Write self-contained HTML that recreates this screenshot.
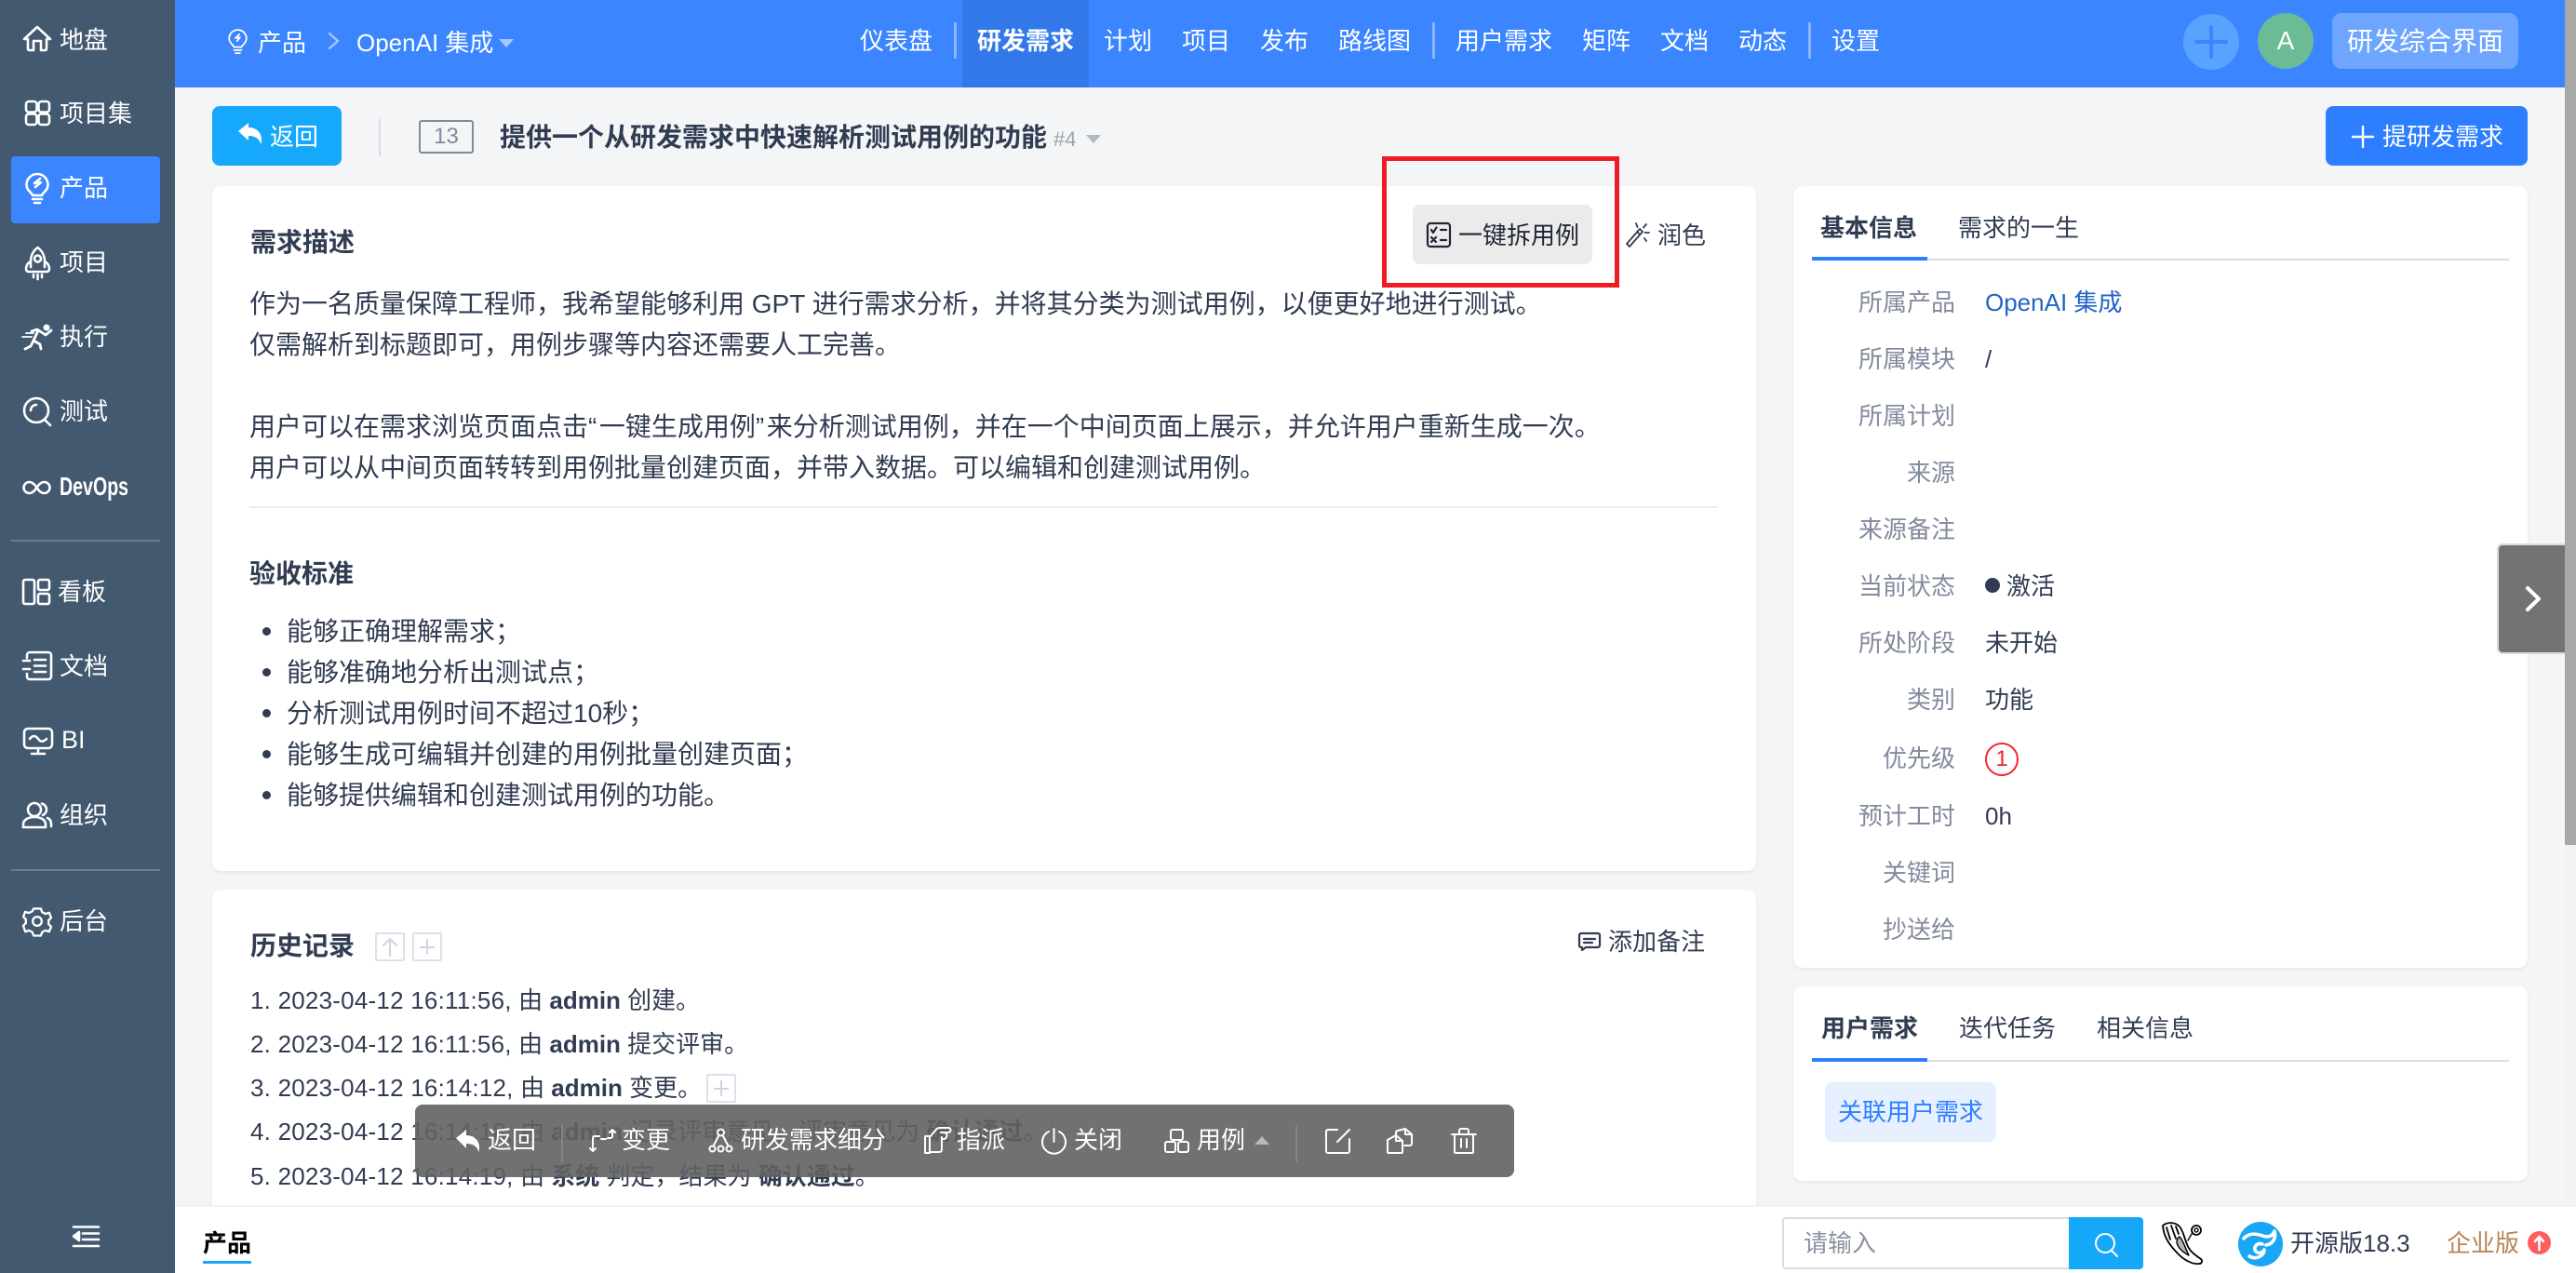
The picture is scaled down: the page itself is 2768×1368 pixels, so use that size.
<!DOCTYPE html>
<html lang="zh"><head><meta charset="utf-8"><title>OpenAI 集成</title>
<style>
*{box-sizing:border-box}
html,body{margin:0;padding:0}
body{width:2768px;height:1368px;overflow:hidden;position:relative;background:#f4f5f7;font-family:"Liberation Sans","Noto Sans CJK SC",sans-serif;font-size:26px;color:#313c52}
.a{position:absolute}
.t{position:absolute;white-space:nowrap;line-height:44px;height:44px}
.b{font-weight:700}
.w{color:#fff}
.h{letter-spacing:.22px}
.q{letter-spacing:2.5px}
svg{position:absolute;overflow:visible;fill:none;stroke:#fff;stroke-width:2.6;stroke-linecap:round;stroke-linejoin:round}
.card{position:absolute;background:#fff;border-radius:10px;box-shadow:0 2px 5px rgba(0,0,0,.06)}
.l{position:absolute;right:667px;white-space:nowrap;line-height:44px;height:44px;color:#838a9d}
.v{position:absolute;left:2133px;white-space:nowrap;line-height:44px;height:44px}
.sep{position:absolute;top:24px;width:3px;height:39px;background:#8ab5ff}
.pl{position:absolute;border:2px solid #dde1e8;border-radius:2px}
.pl i{position:absolute;background:#cfd5e0}
</style></head><body>

<!-- main cards -->
<div class="card" style="left:228px;top:200px;width:1659px;height:736px"></div>
<div class="t b" style="left:269px;top:239px;font-size:28px">需求描述</div>
<div class="t" style="left:268px;top:305px;font-size:28px">作为一名质量保障工程师，我希望能够利用 GPT 进行需求分析，并将其分类为测试用例，以便更好地进行测试。</div>
<div class="t" style="left:268px;top:349px;font-size:28px">仅需解析到标题即可，用例步骤等内容还需要人工完善。</div>
<div class="t" style="left:268px;top:437px;font-size:28px">用户可以在需求浏览页面点击<span class="q">“</span>一键生成用例<span class="q">”</span>来分析测试用例，并在一个中间页面上展示，并允许用户重新生成一次。</div>
<div class="t" style="left:268px;top:481px;font-size:28px">用户可以从中间页面转转到用例批量创建页面，并带入数据。可以编辑和创建测试用例。</div>
<div class="a" style="left:268px;top:544px;width:1578px;height:2px;background:#eceef1"></div>
<div class="t b" style="left:268px;top:595px;font-size:28px">验收标准</div>
<div class="a" style="left:282px;top:674px;width:9px;height:9px;border-radius:50%;background:#313c52"></div>
<div class="a" style="left:282px;top:718px;width:9px;height:9px;border-radius:50%;background:#313c52"></div>
<div class="a" style="left:282px;top:762px;width:9px;height:9px;border-radius:50%;background:#313c52"></div>
<div class="a" style="left:282px;top:806px;width:9px;height:9px;border-radius:50%;background:#313c52"></div>
<div class="a" style="left:282px;top:850px;width:9px;height:9px;border-radius:50%;background:#313c52"></div>
<div class="t" style="left:308px;top:657px;font-size:28px">能够正确理解需求；</div>
<div class="t" style="left:308px;top:701px;font-size:28px">能够准确地分析出测试点；</div>
<div class="t" style="left:308px;top:745px;font-size:28px">分析测试用例时间不超过10秒；</div>
<div class="t" style="left:308px;top:789px;font-size:28px">能够生成可编辑并创建的用例批量创建页面；</div>
<div class="t" style="left:308px;top:833px;font-size:28px">能够提供编辑和创建测试用例的功能。</div>

<!-- one click button -->
<div class="a" style="left:1518px;top:220px;width:193px;height:64px;background:#ebebeb;border-radius:8px"></div>
<svg style="left:1533px;top:239px;stroke:#1f2533;stroke-width:2.2" width="26" height="27" viewBox="0 0 26 27"><rect x="1" y="1" width="24" height="25" rx="3"/><path d="M5 8l2 3L10.500 5.500M15 8h6M5 16l5 5M10 16l-5 5M15 19h6"/></svg>
<div class="t" style="left:1567px;top:231px;color:#1f2533">一键拆用例</div>
<svg style="left:1747px;top:238px;stroke:#313c52;stroke-width:1.800" width="26" height="28" viewBox="0 0 26 28"><path d="M1 24l3 3L18 11l-3-3zM12 11l3 3M11 2l1.500 4M22 3l-3 3.500M25 12l-4.500 0M20 18l2 3"/></svg>
<div class="t" style="left:1781px;top:231px">润色</div>
<div class="a" style="left:1485px;top:168px;width:255px;height:141px;border:5px solid #ee1c25"></div>

<!-- history -->
<div class="card" style="left:228px;top:956px;width:1659px;height:360px"></div>
<div class="t b" style="left:269px;top:995px;font-size:28px">历史记录</div>
<div class="pl" style="left:403px;top:1002px;width:32px;height:31px"><svg style="left:6px;top:4px;stroke:#cfd5e0;stroke-width:2.200" width="16" height="19" viewBox="0 0 16 19"><path d="M8 19V1M1 8l7-7 7 7"/></svg></div>
<div class="pl" style="left:443px;top:1002px;width:32px;height:31px"><i style="left:6px;top:12.500px;width:16px;height:2px"></i><i style="left:13px;top:5px;width:2px;height:17px"></i></div>
<svg style="left:1696px;top:1002px;stroke:#313c52;stroke-width:2.200" width="24" height="20" viewBox="0 0 24 20"><path d="M3 1h18a2 2 0 0 1 2 2v11a2 2 0 0 1-2 2H8l-4 3v-3H3a2 2 0 0 1-2-2V3a2 2 0 0 1 2-2zM6 7h12M6 11h9"/></svg>
<div class="t" style="left:1728px;top:990px">添加备注</div>
<div class="t" style="left:269px;top:1053px"><span class="h">1. 2023-04-12 16:11:56, </span>由 <span class="b">admin</span> 创建。</div>
<div class="t" style="left:269px;top:1100px"><span class="h">2. 2023-04-12 16:11:56, </span>由 <span class="b">admin</span> 提交评审。</div>
<div class="t" style="left:269px;top:1147px"><span class="h">3. 2023-04-12 16:14:12, </span>由 <span class="b">admin</span> 变更。</div>
<div class="pl" style="left:759px;top:1154px;width:32px;height:31px"><i style="left:6px;top:12.500px;width:16px;height:2px"></i><i style="left:13px;top:5px;width:2px;height:17px"></i></div>
<div class="t" style="left:269px;top:1194px"><span class="h">4. 2023-04-12 16:14:18, </span>由 <span class="b">admin</span> 记录评审意见，评审意见为 <span class="b">确认通过</span>。</div>
<div class="pl" style="left:1130px;top:1200px;width:32px;height:31px"><i style="left:6px;top:12.500px;width:16px;height:2px"></i><i style="left:13px;top:5px;width:2px;height:17px"></i></div>
<div class="t" style="left:269px;top:1242px"><span class="h">5. 2023-04-12 16:14:19, </span>由 <span class="b">系统</span> 判定，结果为 <span class="b">确认通过</span>。</div>

<!-- toolbar -->
<div class="a" style="left:446px;top:1187px;width:1181px;height:78px;background:rgba(98,98,98,.9);border-radius:8px"></div>
<svg style="left:490px;top:1213px;stroke-width:0;fill:#fff" width="25" height="26" viewBox="0 0 25 26"><path d="M0 10L11 1v6c8 0 14 5 14 13 0 2-.3 4-.8 5-1-5-5-9-13.200-9v5z"/></svg>
<div class="t w" style="left:524px;top:1203px">返回</div>
<div class="a" style="left:603px;top:1209px;width:2px;height:40px;background:#858585"></div>
<svg style="left:635px;top:1213px;stroke-width:2" width="25" height="25" viewBox="0 0 25 25"><path d="M11 11H16M9 8H4a2 2 0 0 0-2 2v14M-1 21l3 3 3-3M23 1v7a2 2 0 0 1-2 2h-3M20 4l3-3 3 3" /></svg>
<div class="t w" style="left:668px;top:1203px">变更</div>
<svg style="left:762px;top:1213px;stroke-width:2" width="25" height="25" viewBox="0 0 25 25"><circle cx="12.500" cy="4" r="3.500"/><circle cx="3.500" cy="21.500" r="3"/><circle cx="12.500" cy="21.500" r="3"/><circle cx="21.500" cy="21.500" r="3"/><path d="M10.500 7L4.500 18.500M14.500 7L20.500 18.500"/></svg>
<div class="t w" style="left:796px;top:1203px">研发需求细分</div>
<svg style="left:993px;top:1211px;stroke-width:2" width="29" height="29" viewBox="0 0 29 29"><path d="M1 10h5v18H1zM6 11l6-7c1-2 3-3 5-3h9a2 2 0 0 1 0 5h-8M6 27h10c2 0 3-1 3-3V11M18 6h3a3.500 3.500 0 0 1 0 7h-2"/></svg>
<div class="t w" style="left:1028px;top:1203px">指派</div>
<svg style="left:1119px;top:1212px;stroke-width:2" width="27" height="28" viewBox="0 0 27 28"><path d="M8 4a12.500 12.500 0 1 0 11 0M13.500 1v14"/></svg>
<div class="t w" style="left:1154px;top:1203px">关闭</div>
<svg style="left:1251px;top:1213px;stroke-width:2" width="27" height="26" viewBox="0 0 27 26"><rect x="7" y="1" width="13" height="11" rx="2"/><rect x="1" y="14" width="11" height="11" rx="2"/><rect x="15" y="14" width="11" height="11" rx="2"/></svg>
<div class="t w" style="left:1286px;top:1203px">用例</div>
<div class="a" style="left:1348px;top:1221px;width:0;height:0;border-left:8px solid transparent;border-right:8px solid transparent;border-bottom:9px solid #b9b9b9"></div>
<div class="a" style="left:1392px;top:1209px;width:2px;height:40px;background:#858585"></div>
<svg style="left:1424px;top:1213px;stroke-width:2" width="27" height="27" viewBox="0 0 27 27"><path d="M13 1H3a2 2 0 0 0-2 2v21a2 2 0 0 0 2 2h21a2 2 0 0 0 2-2V11M26 1L13 14"/></svg>
<svg style="left:1490px;top:1212px;stroke-width:2" width="28" height="28" viewBox="0 0 28 28"><path d="M10 7V5a2 2 0 0 1 2-2l8-2 7 6v10a2 2 0 0 1-2 2h-6M20 1v6h7M1 13l9-5 7 6v12a1 1 0 0 1-1 1H2a1 1 0 0 1-1-1zM10 8v6h7"/></svg>
<svg style="left:1559px;top:1212px;stroke-width:2" width="28" height="28" viewBox="0 0 28 28"><path d="M1 7h26M9 7V3a2 2 0 0 1 2-2h6a2 2 0 0 1 2 2v4M4 7v19a1 1 0 0 0 1 1h18a1 1 0 0 0 1-1V7M11 12v9M17 12v9"/></svg>

<!-- right cards -->
<div class="card" style="left:1927px;top:200px;width:789px;height:840px"></div>
<div class="t b" style="left:1956px;top:223px">基本信息</div>
<div class="t" style="left:2104px;top:223px">需求的一生</div>
<div class="a" style="left:1947px;top:278px;width:749px;height:2px;background:#dcdee2"></div>
<div class="a" style="left:1947px;top:276px;width:124px;height:4px;background:#2e7fff"></div>
<div class="l" style="top:303px">所属产品</div><div class="v" style="top:303px;color:#2463c7">OpenAI 集成</div>
<div class="l" style="top:364px">所属模块</div><div class="v" style="top:364px">/</div>
<div class="l" style="top:425px">所属计划</div>
<div class="l" style="top:486px">来源</div>
<div class="l" style="top:547px">来源备注</div>
<div class="l" style="top:608px">当前状态</div><div class="v" style="top:608px;left:2156px">激活</div>
<div class="a" style="left:2133px;top:621px;width:16px;height:16px;border-radius:50%;background:#313c52"></div>
<div class="l" style="top:669px">所处阶段</div><div class="v" style="top:669px">未开始</div>
<div class="l" style="top:730px">类别</div><div class="v" style="top:730px">功能</div>
<div class="l" style="top:793px">优先级</div>
<div class="a" style="left:2133px;top:798px;width:36px;height:36px;border:2px solid #f5242c;border-radius:50%;color:#f5242c;text-align:center;line-height:32px;font-size:24px">1</div>
<div class="l" style="top:855px">预计工时</div><div class="v" style="top:855px">0h</div>
<div class="l" style="top:916px">关键词</div>
<div class="l" style="top:977px">抄送给</div>

<div class="card" style="left:1927px;top:1060px;width:789px;height:209px"></div>
<div class="t b" style="left:1957px;top:1083px">用户需求</div>
<div class="t" style="left:2105px;top:1083px">迭代任务</div>
<div class="t" style="left:2253px;top:1083px">相关信息</div>
<div class="a" style="left:1947px;top:1139px;width:749px;height:2px;background:#dcdee2"></div>
<div class="a" style="left:1947px;top:1137px;width:124px;height:4px;background:#2e7fff"></div>
<div class="a" style="left:1961px;top:1163px;width:184px;height:64px;background:#e6f0ff;border-radius:8px;color:#2e7fff;text-align:center;line-height:64px">关联用户需求</div>

<!-- header action row -->
<div class="a" style="left:228px;top:114px;width:139px;height:64px;background:#16a8fb;border-radius:8px"></div>
<svg style="left:256px;top:132px;stroke-width:0;fill:#fff" width="25" height="24" viewBox="0 0 25 24"><path d="M0 9L11 0v5c8 0 14 5 14 13 0 2-.3 4-.8 5-1-5-5-9-13.200-9v5z"/></svg>
<div class="t w" style="left:290px;top:125px">返回</div>
<div class="a" style="left:407px;top:128px;width:2px;height:40px;background:#d9dce2"></div>
<div class="a" style="left:450px;top:129px;width:59px;height:36px;border:2px solid #838a9d;border-radius:3px;color:#838a9d;text-align:center;line-height:32px;font-size:24px">13</div>
<div class="t b" style="left:537px;top:126px;font-size:28px">提供一个从研发需求中快速解析测试用例的功能</div>
<div class="t" style="left:1132px;top:128px;font-size:22px;color:#9ba1b0">#4</div>
<div class="a" style="left:1167px;top:145px;width:0;height:0;border-left:8px solid transparent;border-right:8px solid transparent;border-top:9px solid #b4b8c4"></div>
<div class="a" style="left:2499px;top:114px;width:217px;height:64px;background:#2e7fff;border-radius:8px"></div>
<svg style="left:2528px;top:136px;stroke-width:2.400" width="22" height="22" viewBox="0 0 22 22"><path d="M11 0v22M0 11h22"/></svg>
<div class="t w" style="left:2560px;top:125px">提研发需求</div>

<!-- drawer handle -->
<div class="a" style="left:2683px;top:584px;width:73px;height:119px;background:#737373;border:2px solid #dcdcdc;border-right:0;border-radius:6px 0 0 6px"></div>
<svg style="left:2714px;top:630px;stroke-width:4" width="16" height="27" viewBox="0 0 16 27"><path d="M2 2l12 11.500L2 25"/></svg>

<!-- topbar -->
<div class="a" style="left:188px;top:0;width:2568px;height:94px;background:#3b86ff"></div>
<svg style="left:245px;top:31px;stroke-width:2.200" width="21" height="28" viewBox="0 0 26 34"><path d="M8 24C7.500 21 1.500 19 1.500 12.500a11.500 11.500 0 0 1 23 0C24.500 19 18.500 21 18 24zM8 28h10M10 32h6M15 7l-5 5 6-1-4 5"/></svg>
<div class="t w" style="left:277px;top:24px">产品</div>
<svg style="left:353px;top:35px;stroke:#a7c7ff;stroke-width:2.400" width="11" height="18" viewBox="0 0 11 18"><path d="M1 1l9 8-9 8"/></svg>
<div class="t w" style="left:383px;top:24px">OpenAI 集成</div>
<div class="a" style="left:536px;top:42px;width:0;height:0;border-left:8px solid transparent;border-right:8px solid transparent;border-top:9px solid #a7c7ff"></div>
<div class="t w" style="left:924px;top:22px">仪表盘</div>
<div class="sep" style="left:1025px"></div>
<div class="a" style="left:1034px;top:0;width:136px;height:94px;background:#3378e8"></div>
<div class="t w b" style="left:1050px;top:22px">研发需求</div>
<div class="t w" style="left:1186px;top:22px">计划</div>
<div class="t w" style="left:1270px;top:22px">项目</div>
<div class="t w" style="left:1354px;top:22px">发布</div>
<div class="t w" style="left:1438px;top:22px">路线图</div>
<div class="sep" style="left:1539px"></div>
<div class="t w" style="left:1564px;top:22px">用户需求</div>
<div class="t w" style="left:1700px;top:22px">矩阵</div>
<div class="t w" style="left:1784px;top:22px">文档</div>
<div class="t w" style="left:1868px;top:22px">动态</div>
<div class="sep" style="left:1943px"></div>
<div class="t w" style="left:1968px;top:22px">设置</div>
<div class="a" style="left:2346px;top:15px;width:60px;height:60px;border-radius:50%;background:#57a3ff"></div>
<svg style="left:2359px;top:28px;stroke:#3b86ff;stroke-width:4" width="34" height="34" viewBox="0 0 34 34"><path d="M17 1v32M1 17h32"/></svg>
<div class="a" style="left:2426px;top:14px;width:60px;height:60px;border-radius:50%;background:#6bbb96;color:#fff;text-align:center;line-height:60px;font-size:28px">A</div>
<div class="a" style="left:2506px;top:14px;width:200px;height:60px;background:#6ea5ff;border-radius:10px;color:#fff;text-align:center;line-height:62px;font-size:28px">研发综合界面</div>

<!-- sidebar -->
<div class="a" style="left:0;top:0;width:188px;height:1368px;background:#43596f"></div>
<div class="a" style="left:12px;top:168px;width:160px;height:72px;background:#3b86ff;border-radius:4px"></div>
<svg style="left:25px;top:28px" width="30" height="27" viewBox="0 0 30 27"><path d="M1 14L15 1l14 13h-4v10.500a1.500 1.500 0 0 1-1.500 1.500H19V16h-8v10H6.500A1.500 1.500 0 0 1 5 24.500V14z"/></svg>
<div class="t w" style="left:64px;top:21px">地盘</div>
<svg style="left:27px;top:108px" width="27" height="27" viewBox="0 0 27 27"><rect x="1" y="1" width="11.500" height="11.500" rx="3"/><rect x="14.500" y="1" width="11.500" height="11.500" rx="3"/><rect x="1" y="14.500" width="11.500" height="11.500" rx="3"/><rect x="14.500" y="14.500" width="11.500" height="11.500" rx="3"/></svg>
<div class="t w" style="left:64px;top:100px">项目集</div>
<svg style="left:27px;top:186px" width="26" height="34" viewBox="0 0 26 34"><path d="M8 24C7.500 21 1.500 19 1.500 12.500a11.500 11.500 0 0 1 23 0C24.500 19 18.500 21 18 24zM8 28h10M10 32h6M16 6l-6 5 7-1-6 5"/></svg>
<div class="t w" style="left:64px;top:180px">产品</div>
<svg style="left:27px;top:265px" width="27" height="35" viewBox="0 0 27 35"><path d="M13.500 1C8 5 6 11 6 16c-4 2-5 5-5 8 0 2 1.500 3 3 3h19c1.500 0 3-1 3-3 0-3-1-6-5-8 0-5-2-11-7.500-15zM6 16v6M21 16v6M9 30v3M13.500 30v5M18 30v3"/><circle cx="13.500" cy="13" r="3.500"/></svg>
<div class="t w" style="left:64px;top:260px">项目</div>
<svg style="left:24px;top:348px;stroke-width:2.800" width="32" height="27" viewBox="0 0 32 27"><circle cx="26" cy="4" r="3.500" fill="#fff" stroke="none"/><path d="M10 8l6-2 9 6 6-5M17 7l-5 11 7 4 1 5M12 18l-3 6-6 3"/><path d="M0 14h10M4 10h8" stroke-width="1.800"/></svg>
<div class="t w" style="left:64px;top:340px">执行</div>
<svg style="left:25px;top:427px" width="30" height="30" viewBox="0 0 30 30"><circle cx="14" cy="14" r="13"/><path d="M8 14a6 6 0 0 1 6-6M23 24l6 6"/></svg>
<div class="t w" style="left:64px;top:420px">测试</div>
<svg style="left:24px;top:517px" width="31" height="14" viewBox="0 0 31 14"><path d="M15.500 7C13 3 10.500 1 7.500 1a6 6 0 0 0 0 12c3 0 5.500-2 8-6 2.500-4 5-6 8-6a6 6 0 0 1 0 12c-3 0-5.500-2-8-6z"/></svg>
<div class="t w b" style="left:64px;top:501px;font-size:28px;transform:scaleX(.7);transform-origin:0 0">DevOps</div>
<div class="a" style="left:12px;top:580px;width:160px;height:2px;background:#6a7d91"></div>
<svg style="left:24px;top:622px" width="30" height="28" viewBox="0 0 30 28"><rect x="1" y="1" width="12" height="26" rx="2"/><rect x="17" y="1" width="12" height="11" rx="2"/><rect x="17" y="16" width="12" height="11" rx="2"/></svg>
<div class="t w" style="left:62px;top:614px">看板</div>
<svg style="left:24px;top:700px" width="32" height="31" viewBox="0 0 32 31"><path d="M5 7V4a3 3 0 0 1 3-3h20a3 3 0 0 1 3 3v23a3 3 0 0 1-3 3H8a3 3 0 0 1-3-3v-3M1 10h7M1 19h7M13 9h12M13 15.500h12M13 22h12"/></svg>
<div class="t w" style="left:64px;top:694px">文档</div>
<svg style="left:25px;top:782px" width="32" height="29" viewBox="0 0 32 29"><rect x="1" y="1" width="30" height="21" rx="4"/><path d="M7 12c3-4 6-4 9 0s6 3 9 0M16 22v6M9 28h14"/></svg>
<div class="t w" style="left:66px;top:773px;font-size:27px">BI</div>
<svg style="left:24px;top:862px" width="32" height="28" viewBox="0 0 32 28"><circle cx="13" cy="8" r="7"/><path d="M1 27v-3c0-5 5-8 12-8s12 3 12 8v3zM21 1.500c3 1 5 3.500 5 6.500s-2 5-4 6M27 17c2.500 1 4 3.500 4 7v2"/></svg>
<div class="t w" style="left:64px;top:854px">组织</div>
<div class="a" style="left:12px;top:934px;width:160px;height:2px;background:#6a7d91"></div>
<svg style="left:24px;top:975px;stroke-width:2.400" width="32" height="30" viewBox="0 0 32 31"><path d="M12 1.500h8l1.500 4 3.800 1.800 4-1.300 2.200 5.500-3 3 .2 2-.2 2 3 3-2.200 5.500-4-1.300-3.800 1.800-1.500 4h-8l-1.500-4-3.800-1.800-4 1.300L.5 20.500l3-3-.2-2 .2-2-3-3L2.700 5l4 1.300 3.800-1.800z"/><circle cx="16" cy="15.500" r="5"/></svg>
<div class="t w" style="left:64px;top:968px">后台</div>
<svg style="left:78px;top:1317px" width="28" height="23" viewBox="0 0 28 23"><path d="M1 1.500h27M11 8.500h17M11 15h17M1 22h27"/><path d="M7 7v9l-6-4.500z" fill="#fff"/></svg>

<!-- bottom bar -->
<div class="a" style="left:188px;top:1295px;width:2580px;height:73px;background:#fff;border-top:2px solid #f0f1f4"></div>
<div class="t b" style="left:218px;top:1314px;color:#000">产品</div>
<div class="a" style="left:218px;top:1355px;width:52px;height:3px;background:#16a8f8"></div>
<div class="a" style="left:1915px;top:1308px;width:309px;height:56px;border:2px solid #dcdcdc;border-right:0;border-radius:4px 0 0 4px"></div>
<div class="t" style="left:1938px;top:1314px;color:#8b91a2">请输入</div>
<div class="a" style="left:2223px;top:1308px;width:80px;height:56px;background:#16a8f8;border-radius:0 4px 4px 0"></div>
<svg style="left:2251px;top:1325px;stroke-width:2" width="25" height="25" viewBox="0 0 25 25"><circle cx="11" cy="11" r="10"/><path d="M18 19l6 6"/></svg>
<svg style="left:2323px;top:1313px;stroke:#000;stroke-width:1.800" width="47" height="46" viewBox="0 0 47 46"><path d="M1 4C6 0 14 0 19 5c4 5 5 12 8 19 2 6 6 10 15 16 2 2 1 5-2 5-7 1-16-4-22-10C9 26 2 17 1 4z" fill="#fff"/><path d="M5 6l4 13M10 4l5 14M15 5l3 8"/><path d="M19 16c4 4 6 12 10 20-6-3-12-8-13-14 0-3 1-5 3-6z" fill="#b5b5b5" stroke-width="1.400"/><circle cx="37" cy="9" r="5" fill="#fff"/><circle cx="37" cy="9" r="2" stroke-width="1.400"/><path d="M32 13l-4 7" stroke-width="1.400"/></svg>
<div class="a" style="left:2405px;top:1313px;width:48px;height:48px;border-radius:50%;background:#18a6f5"></div>
<svg style="left:2405px;top:1313px;stroke-width:3.600" width="48" height="48" viewBox="0 0 48 48"><path d="M6 18c6-7 15-5 20-3s11 1 13-5c2 8-2 14-9 15M26 24c-5-2-9 2-8 6s8 5 10 0c0 7-9 11-16 7"/></svg>
<div class="t" style="left:2461px;top:1314px">开源版18.3</div>
<div class="t" style="left:2629px;top:1314px;color:#b98553">企业版</div>
<div class="a" style="left:2716px;top:1323px;width:25px;height:25px;border-radius:50%;background:#ff5d5d"></div>
<svg style="left:2723px;top:1328px;stroke-width:2.600" width="11" height="15" viewBox="0 0 11 15"><path d="M5.500 15V1M1 6l4.500-5L10 6"/></svg>

<!-- scrollbar -->
<div class="a" style="left:2756px;top:0;width:12px;height:1295px;background:#f2f3f5"></div>
<div class="a" style="left:2756px;top:0;width:12px;height:908px;background:#a8a8a8"></div>
</body></html>
